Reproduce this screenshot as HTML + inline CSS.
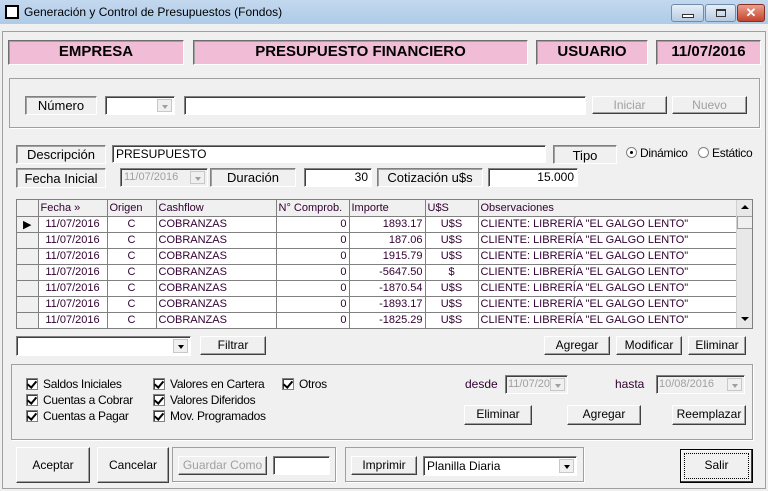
<!DOCTYPE html>
<html><head><meta charset="utf-8">
<style>
*{box-sizing:border-box;margin:0;padding:0}
body{width:768px;height:491px;overflow:hidden;background:#f0f0f0;font-family:"Liberation Sans",sans-serif;font-size:12px;color:#000;position:relative}
.a{position:absolute}
.tb{left:0;top:0;width:768px;height:24px;background:linear-gradient(#c3d8ee,#aecbe8);}
.cl{left:2px;top:31px;width:764px;height:458px;border:1px solid #a0a0a0}
.pk{background:#f1bcd5;border:1px solid;border-color:#6d6d6d #fff #fff #6d6d6d;box-shadow:inset 1px 1px 0 #a0a0a0;font-weight:bold;font-size:15px;text-align:center;line-height:22px}
.lb{border:1px solid;border-color:#808080 #fff #fff #808080;box-shadow:inset 1px 1px 0 #a0a0a0;text-align:center;font-size:13px;line-height:17px}
.in{background:#fff;border:1px solid;border-color:#808080 #fff #fff #808080;box-shadow:inset 1px 1px 0 #404040;font-size:12px;line-height:16px;padding:0 3px}
.btn{background:#f0f0f0;border:1px solid;border-color:#fff #404040 #404040 #fff;box-shadow:inset -1px -1px 0 #a0a0a0;text-align:center;font-size:12px;line-height:17px}
.dis{color:#a0a0a0}
.gb{border:1px solid #a0a0a0;box-shadow:1px 1px 0 #fff}
.cmb{background:#fff;border:1px solid;border-color:#808080 #fff #fff #808080;box-shadow:inset 1px 1px 0 #404040}
.cmb.d{background:#f0f0f0;font-size:11px}
.ar{position:absolute;right:2px;top:2px;bottom:2px;width:15px;background:#f0f0f0;border:1px solid #c8c8c8}
.ar:after{content:"";position:absolute;left:4px;top:5px;border:3px solid transparent;border-top:4px solid #a0a0a0}
.ar.k:after{border-top-color:#000}
.cb{font-size:12px;line-height:14px;letter-spacing:-0.3px}
.cb i{display:inline-block;width:12px;height:12px;border:1px solid #808080;background:#fff;vertical-align:-2px;margin-right:5px;position:relative;box-shadow:inset 1px 1px 0 #404040}
.cb i:after{content:"";position:absolute;left:2px;top:0px;width:4px;height:7px;border:solid #000;border-width:0 2px 2px 0;transform:rotate(40deg)}
table{border-collapse:collapse;font-size:11px;}
td{border-right:1px solid #808080;border-bottom:1px solid #808080;height:16px;padding:0 2px;color:#300030;white-space:nowrap;overflow:hidden}
</style></head><body>
<div class="a tb"></div>
<div class="a" style="left:5px;top:5px;width:14px;height:14px;border:2px solid #000;background:#fff"></div>
<div class="a" style="left:24px;top:5px;font-size:12px">Generación y Control de Presupuestos (Fondos)</div>
<div class="a" style="left:671px;top:4px;width:33px;height:18px;border:1px solid #708cad;border-radius:3px;background:linear-gradient(#e6eef8,#b8cbe2)"><div class="a" style="left:10px;top:9px;width:12px;height:4px;border:1px solid #333;background:#fff"></div></div>
<div class="a" style="left:705px;top:4px;width:31px;height:18px;border:1px solid #708cad;border-radius:3px;background:linear-gradient(#e6eef8,#b8cbe2)"><div class="a" style="left:10px;top:4px;width:10px;height:8px;border:1px solid #333;border-top-width:2px"></div></div>
<div class="a" style="left:737px;top:4px;width:28px;height:18px;border:1px solid #8a2c20;border-radius:3px;background:linear-gradient(#e8a08e,#c4442e);color:#fff;font-weight:bold;font-size:13px;text-align:center;line-height:16px">✕</div>
<div class="a cl"></div>

<div class="a pk" style="left:8px;top:40px;width:176px;height:25px">EMPRESA</div>
<div class="a pk" style="left:193px;top:40px;width:335px;height:25px">PRESUPUESTO FINANCIERO</div>
<div class="a pk" style="left:536px;top:40px;width:112px;height:25px">USUARIO</div>
<div class="a pk" style="left:656px;top:40px;width:105px;height:25px">11/07/2016</div>

<div class="a gb" style="left:9px;top:78px;width:751px;height:50px"></div>
<div class="a lb" style="left:25px;top:96px;width:72px;height:19px">Número</div>
<div class="a cmb" style="left:105px;top:96px;width:70px;height:19px"><div class="ar"></div></div>
<div class="a in" style="left:184px;top:96px;width:402px;height:19px"></div>
<div class="a btn dis" style="left:592px;top:96px;width:75px;height:18px">Iniciar</div>
<div class="a btn dis" style="left:672px;top:96px;width:75px;height:18px">Nuevo</div>

<div class="a lb" style="left:16px;top:145px;width:90px;height:19px">Descripción</div>
<div class="a in" style="left:112px;top:145px;width:434px;height:18px">PRESUPUESTO</div>
<div class="a lb" style="left:553px;top:145px;width:64px;height:19px;line-height:19px">Tipo</div>
<div class="a" style="left:626px;top:146px;font-size:12px;letter-spacing:-0.3px"><span style="display:inline-block;width:11px;height:11px;border-radius:50%;border:1px solid #808080;background:#fff;vertical-align:-1px;position:relative"><span class="a" style="left:3px;top:3px;width:3px;height:3px;background:#000;border-radius:50%"></span></span> Dinámico</div>
<div class="a" style="left:698px;top:146px;font-size:12px;letter-spacing:-0.3px"><span style="display:inline-block;width:11px;height:11px;border-radius:50%;border:1px solid #808080;background:#fff;vertical-align:-1px"></span> Estático</div>

<div class="a lb" style="left:16px;top:168px;width:90px;height:20px;line-height:19px">Fecha Inicial</div>
<div class="a cmb d" style="left:120px;top:168px;width:88px;height:19px;color:#a0a0a0;padding-left:3px;line-height:17px">11/07/2016<div class="ar"></div></div>
<div class="a lb" style="left:210px;top:168px;width:86px;height:19px">Duración</div>
<div class="a in" style="left:304px;top:168px;width:68px;height:19px;text-align:right">30</div>
<div class="a lb" style="left:377px;top:168px;width:106px;height:19px">Cotización u$s</div>
<div class="a in" style="left:488px;top:168px;width:90px;height:19px;text-align:right">15.000</div>

<div class="a" style="left:16px;top:199px;width:737px;height:130px;border:1px solid #808080;background:#fff;overflow:hidden">
<table style="position:absolute;left:0;top:0">
<tr style="background:#f0f0f0"><td style="width:21px;height:15px"></td><td style="width:69px">Fecha »</td><td style="width:49px">Origen</td><td style="width:120px">Cashflow</td><td style="width:73px">N° Comprob.</td><td style="width:76px">Importe</td><td style="width:53px">U$S</td><td style="width:259px">Observaciones</td></tr>
<tr><td style="background:#f0f0f0;padding-left:6px;color:#000">▶</td><td style="text-align:center">11/07/2016</td><td style="text-align:center">C</td><td>COBRANZAS</td><td style="text-align:right">0</td><td style="text-align:right">1893.17</td><td style="text-align:center">U$S</td><td>CLIENTE: LIBRERÍA "EL GALGO LENTO"</td></tr>
<tr><td style="background:#f0f0f0"></td><td style="text-align:center">11/07/2016</td><td style="text-align:center">C</td><td>COBRANZAS</td><td style="text-align:right">0</td><td style="text-align:right">187.06</td><td style="text-align:center">U$S</td><td>CLIENTE: LIBRERÍA "EL GALGO LENTO"</td></tr>
<tr><td style="background:#f0f0f0"></td><td style="text-align:center">11/07/2016</td><td style="text-align:center">C</td><td>COBRANZAS</td><td style="text-align:right">0</td><td style="text-align:right">1915.79</td><td style="text-align:center">U$S</td><td>CLIENTE: LIBRERÍA "EL GALGO LENTO"</td></tr>
<tr><td style="background:#f0f0f0"></td><td style="text-align:center">11/07/2016</td><td style="text-align:center">C</td><td>COBRANZAS</td><td style="text-align:right">0</td><td style="text-align:right">-5647.50</td><td style="text-align:center">$</td><td>CLIENTE: LIBRERÍA "EL GALGO LENTO"</td></tr>
<tr><td style="background:#f0f0f0"></td><td style="text-align:center">11/07/2016</td><td style="text-align:center">C</td><td>COBRANZAS</td><td style="text-align:right">0</td><td style="text-align:right">-1870.54</td><td style="text-align:center">U$S</td><td>CLIENTE: LIBRERÍA "EL GALGO LENTO"</td></tr>
<tr><td style="background:#f0f0f0"></td><td style="text-align:center">11/07/2016</td><td style="text-align:center">C</td><td>COBRANZAS</td><td style="text-align:right">0</td><td style="text-align:right">-1893.17</td><td style="text-align:center">U$S</td><td>CLIENTE: LIBRERÍA "EL GALGO LENTO"</td></tr>
<tr><td style="background:#f0f0f0"></td><td style="text-align:center">11/07/2016</td><td style="text-align:center">C</td><td>COBRANZAS</td><td style="text-align:right">0</td><td style="text-align:right">-1825.29</td><td style="text-align:center">U$S</td><td>CLIENTE: LIBRERÍA "EL GALGO LENTO"</td></tr>
</table>
<div class="a" style="right:0;top:0;width:16px;height:128px;background:#e8e8e8;border-left:1px solid #d0d0d0">
<div class="a" style="left:4px;top:5px;border:4px solid transparent;border-bottom:4px solid #000;border-top:0"></div>
<div class="a" style="left:0;top:16px;width:16px;height:13px;background:#f0f0f0;border:1px solid #a0a0a0"></div>
<div class="a" style="left:4px;top:117px;border:4px solid transparent;border-top:4px solid #000;border-bottom:0"></div>
</div>
</div>

<div class="a cmb" style="left:16px;top:336px;width:175px;height:20px"><div class="ar k"></div></div>
<div class="a btn" style="left:200px;top:336px;width:66px;height:19px">Filtrar</div>
<div class="a btn" style="left:544px;top:336px;width:66px;height:19px">Agregar</div>
<div class="a btn" style="left:616px;top:336px;width:66px;height:19px">Modificar</div>
<div class="a btn" style="left:688px;top:336px;width:58px;height:19px">Eliminar</div>

<div class="a gb" style="left:11px;top:364px;width:742px;height:76px"></div>
<div class="a cb" style="left:26px;top:377px"><i></i>Saldos Iniciales</div>
<div class="a cb" style="left:26px;top:393px"><i></i>Cuentas a Cobrar</div>
<div class="a cb" style="left:26px;top:409px"><i></i>Cuentas a Pagar</div>
<div class="a cb" style="left:153px;top:377px"><i></i>Valores en Cartera</div>
<div class="a cb" style="left:153px;top:393px"><i></i>Valores Diferidos</div>
<div class="a cb" style="left:153px;top:409px"><i></i>Mov. Programados</div>
<div class="a cb" style="left:282px;top:377px"><i></i>Otros</div>
<div class="a" style="left:465px;top:377px;color:#300030">desde</div>
<div class="a cmb d" style="left:505px;top:375px;width:63px;height:19px;color:#a0a0a0;padding-left:2px;line-height:17px;overflow:hidden;white-space:nowrap">11/07/2016<div class="ar"></div></div>
<div class="a" style="left:615px;top:377px;color:#300030">hasta</div>
<div class="a cmb d" style="left:656px;top:375px;width:89px;height:19px;color:#a0a0a0;padding-left:2px;line-height:17px">10/08/2016<div class="ar"></div></div>
<div class="a btn" style="left:464px;top:405px;width:68px;height:20px">Eliminar</div>
<div class="a btn" style="left:567px;top:405px;width:74px;height:20px">Agregar</div>
<div class="a btn" style="left:672px;top:405px;width:74px;height:20px">Reemplazar</div>

<div class="a btn" style="left:16px;top:447px;width:74px;height:36px;line-height:34px">Aceptar</div>
<div class="a btn" style="left:97px;top:447px;width:72px;height:36px;line-height:34px">Cancelar</div>
<div class="a gb" style="left:172px;top:447px;width:164px;height:35px"></div>
<div class="a btn dis" style="left:178px;top:456px;width:89px;height:19px">Guardar Como</div>
<div class="a in" style="left:273px;top:456px;width:57px;height:19px"></div>
<div class="a gb" style="left:345px;top:447px;width:239px;height:35px"></div>
<div class="a btn" style="left:351px;top:456px;width:66px;height:19px">Imprimir</div>
<div class="a cmb" style="left:423px;top:456px;width:154px;height:20px;padding-left:3px;line-height:18px">Planilla Diaria<div class="ar k"></div></div>
<div class="a btn" style="left:680px;top:449px;width:73px;height:34px;border:1px solid #000;box-shadow:inset -1px -1px 0 #404040,inset 1px 1px 0 #fff;line-height:30px"><div class="a" style="left:3px;top:3px;right:3px;bottom:3px;border:1px dotted #000"></div>Salir</div>
</body></html>
